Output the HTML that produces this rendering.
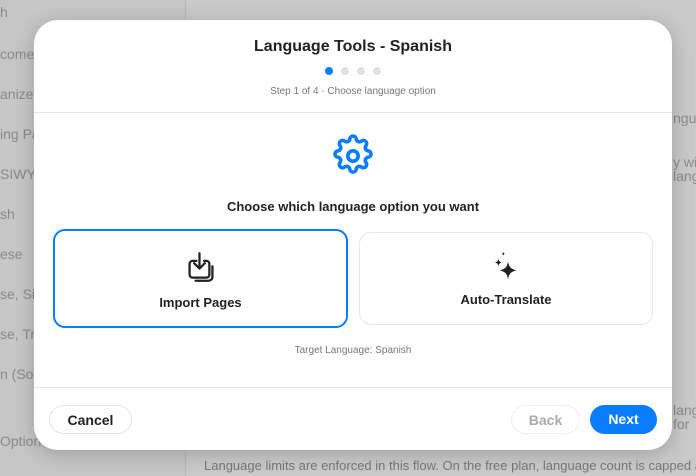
<!DOCTYPE html>
<html><head><meta charset="utf-8"><style>
*{box-sizing:border-box;margin:0;padding:0}
body{width:696px;height:476px;overflow:hidden;background:#c9c9c9;font-family:"Liberation Sans",sans-serif;position:relative}
.bg{position:absolute;color:#8a8a8a;font-size:14px;white-space:nowrap}
.side{position:absolute;left:0;top:0;width:186px;height:476px;background:#c6c6c6;border-right:1px solid #b8b8b8}
.modal{position:absolute;left:34px;top:20px;width:638px;height:430px;background:#fff;border-radius:24px;box-shadow:0 4px 20px rgba(0,0,0,.2);overflow:hidden}
.title{position:absolute;top:18px;width:100%;text-align:center;font-size:16px;font-weight:bold;color:#222}
.dots{position:absolute;top:47px;left:291px;display:flex;gap:8px}
.dots span{width:8px;height:8px;border-radius:50%;background:#e0e0e0}
.dots span:first-child{background:#0a7cff}
.step{position:absolute;top:66px;width:100%;text-align:center;font-size:10px;color:#777}
.hr{position:absolute;left:0;width:100%;height:1px;background:#e6e6e6}
.q{position:absolute;top:179px;width:100%;text-align:center;font-size:13px;font-weight:bold;color:#222}
.card{position:absolute;border-radius:12px;text-align:center;font-size:13px;font-weight:bold;color:#222}
.btn{position:absolute;top:385px;height:29px;border-radius:15px;font-size:14px;font-weight:bold;text-align:center;line-height:29px}
</style></head><body>
<div class="side"></div>
<div class="bg" style="left:0;top:4px">h</div>
<div class="bg" style="left:0;top:46px">come</div>
<div class="bg" style="left:0;top:86px">anizer</div>
<div class="bg" style="left:0;top:126px">ing Pa</div>
<div class="bg" style="left:0;top:166px">SIWYG</div>
<div class="bg" style="left:0;top:206px">sh</div>
<div class="bg" style="left:0;top:246px">ese</div>
<div class="bg" style="left:0;top:286px">se, Si</div>
<div class="bg" style="left:0;top:326px">se, Tr</div>
<div class="bg" style="left:0;top:366px">n (Sou</div>
<div class="bg" style="left:0;top:433px">Option</div>
<div class="bg" style="left:673px;top:110px">ngua</div>
<div class="bg" style="left:673px;top:154px">y wi</div>
<div class="bg" style="left:673px;top:168px">lang</div>
<div class="bg" style="left:673px;top:402px">lang</div>
<div class="bg" style="left:673px;top:416px">for</div>
<div class="bg" style="left:204px;top:458px;font-size:13px;color:#777">Language limits are enforced in this flow. On the free plan, language count is capped at</div>
<div class="modal">
<div class="title">Language Tools - Spanish</div>
<div class="dots"><span></span><span></span><span></span><span></span></div>
<div class="step">Step 1 of 4 · Choose language option</div>
<div class="hr" style="top:92px"></div>
<svg style="position:absolute;left:296px;top:113px" width="46" height="46" viewBox="0 0 24 24" fill="none" stroke="#0a7cff" stroke-width="1.9" stroke-linejoin="round"><path d="M10.3 3.3a1.7 1.7 0 0 1 3.4 0 1.7 1.7 0 0 0 2.6 1 1.7 1.7 0 0 1 2.4 2.4 1.7 1.7 0 0 0 1 2.6 1.7 1.7 0 0 1 0 3.4 1.7 1.7 0 0 0-1 2.6 1.7 1.7 0 0 1-2.4 2.4 1.7 1.7 0 0 0-2.6 1 1.7 1.7 0 0 1-3.4 0 1.7 1.7 0 0 0-2.6-1 1.7 1.7 0 0 1-2.4-2.4 1.7 1.7 0 0 0-1-2.6 1.7 1.7 0 0 1 0-3.4 1.7 1.7 0 0 0 1-2.6 1.7 1.7 0 0 1 2.4-2.4 1.7 1.7 0 0 0 2.6-1z"/><circle cx="12" cy="12" r="2.7"/></svg>
<div class="q">Choose which language option you want</div>
<div class="card" style="left:19px;top:209px;width:295px;height:99px;border:2px solid #0a7cff">
<svg style="position:absolute;left:132px;top:20px" width="28" height="32" viewBox="3 1.5 18 21" fill="none" stroke="#222" stroke-width="1.5" stroke-linecap="round" stroke-linejoin="round"><path d="M9 8H6.5a2 2 0 0 0-2 2v7a2 2 0 0 0 2 2h9a2 2 0 0 0 2-2v-7a2 2 0 0 0-2-2H14"/><path d="M11 3v10M7.5 9.5 11 13l3.5-3.5"/><path d="M19.5 11.5v7a2.5 2.5 0 0 1-2.5 2.5H8.5"/></svg>
<div style="position:absolute;top:64px;width:100%">Import Pages</div></div>
<div class="card" style="left:325px;top:212px;width:294px;height:93px;border:1px solid #e8e8e8">
<svg style="position:absolute;left:134px;top:18px" width="24" height="29" viewBox="4 0.5 17 21" fill="#222"><path d="M14 8c.6 4 2 5.5 6 6.5-4 1-5.4 2.5-6 6.5-.6-4-2-5.5-6-6.5 4-1 5.4-2.5 6-6.5z"/><path d="M7 6c.3 1.8.9 2.4 2.5 2.8C7.9 9.2 7.3 9.8 7 11.6 6.7 9.8 6.1 9.200 4.5 8.8 6.1 8.4 6.7 7.8 7 6z"/><path d="M10.5 1c.2 1 .5 1.3 1.4 1.5-.9.2-1.2.5-1.4 1.5-.2-1-.5-1.300-1.4-1.5.9-.2 1.2-.5 1.4-1.5z"/></svg>
<div style="position:absolute;top:59px;width:100%">Auto-Translate</div></div>
<div style="position:absolute;top:325px;width:100%;text-align:center;font-size:10px;color:#777">Target Language: Spanish</div>
<div class="hr" style="top:367px"></div>
<div class="btn" style="left:15px;width:83px;border:1px solid #e6e6e6;color:#222">Cancel</div>
<div class="btn" style="left:477px;width:69px;border:1px solid #efefef;color:#aaa">Back</div>
<div class="btn" style="left:556px;width:67px;background:#0a7cff;color:#fff">Next</div>
</div>
</body></html>
